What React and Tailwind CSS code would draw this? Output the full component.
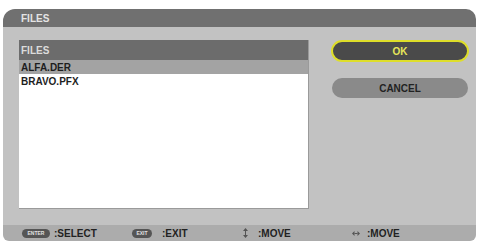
export default function App() {
  const font = { fontFamily: '"Liberation Sans", Arial, sans-serif' };
  return (
    <div className="w-[479px] h-[242px] bg-white overflow-hidden" style={font}>
      <div className="ml-[3px] pt-[9px] w-[473px]">
        <div className="h-[232px] flex flex-col rounded-tl-[12px] rounded-tr-[10px] rounded-b-[6px] overflow-hidden">
          {/* Title bar */}
          <div className="h-[18px] bg-[#707070] flex items-center pl-[18px] text-[10px] font-bold text-[#e4e4e4]">
            FILES
          </div>
          {/* Body */}
          <div className="flex-1 bg-[#c2c2c2] flex pl-[16px] pt-[13px] pb-[16px]">
            <div className="w-[290px] bg-white flex flex-col border-r border-b border-[#9a9a9a]">
              <div className="h-[20px] bg-[#6c6c6c] flex items-center pl-[2px] text-[10px] font-bold text-[#dcdcdc]">
                FILES
              </div>
              <div className="h-[14px] bg-[#a3a3a3] flex items-center pl-[2px] text-[10px] font-bold text-[#1e1e1e]">
                ALFA.DER
              </div>
              <div className="h-[15px] flex items-center pl-[2px] text-[10px] font-bold text-[#1e1e1e]">
                BRAVO.PFX
              </div>
            </div>
            <div className="ml-[22px] w-[138px] flex flex-col">
              <div className="h-[22px] rounded-full bg-[#4a4a4a] border-2 border-[#dede2a] flex items-center justify-center text-[10px] font-bold text-[#e6e65a]">
                OK
              </div>
              <div className="mt-[16px] mx-[1px] h-[20px] rounded-full bg-[#8a8a8a] flex items-center justify-center text-[10px] font-bold text-[#222222]">
                CANCEL
              </div>
            </div>
          </div>
          {/* Footer */}
          <div className="h-[16px] bg-[#acacac] flex items-center pl-[19px] text-[10px] font-bold text-[#222222]">
            <div className="w-[110px] flex items-center">
              <div className="w-[28px] h-[9px] rounded-full bg-[#555555] flex items-center justify-center text-[5px] text-[#e0e0e0] leading-none">ENTER</div>
              <span className="ml-[4px]">:SELECT</span>
            </div>
            <div className="w-[110px] flex items-center">
              <div className="w-[20px] h-[9px] rounded-full bg-[#555555] flex items-center justify-center text-[5px] text-[#e0e0e0] leading-none">EXIT</div>
              <span className="ml-[10px]">:EXIT</span>
            </div>
            <div className="w-[110px] flex items-center">
              <svg width="5" height="10" viewBox="0 0 5 10" className="ml-[1px]">
                <path d="M2.5 0 L5 3 L0 3 Z M2.5 10 L5 7 L0 7 Z" fill="#555" />
                <rect x="2" y="3" width="1" height="4" fill="#555" />
              </svg>
              <span className="ml-[10px]">:MOVE</span>
            </div>
            <div className="flex items-center">
              <svg width="8" height="5" viewBox="0 0 8 5">
                <path d="M0 2.5 L2.5 0 L2.5 5 Z M8 2.5 L5.5 0 L5.5 5 Z" fill="#555" />
                <rect x="2.5" y="2" width="3" height="1" fill="#555" />
              </svg>
              <span className="ml-[7px]">:MOVE</span>
            </div>
          </div>
        </div>
      </div>
    </div>
  );
}
